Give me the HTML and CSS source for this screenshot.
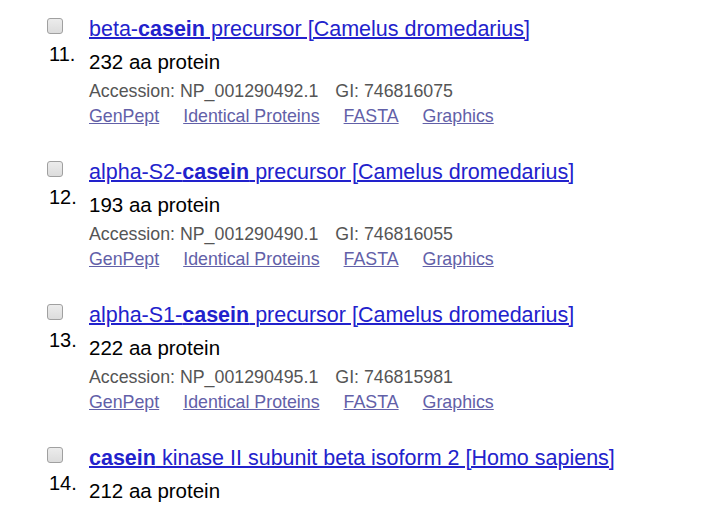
FILE: index.html
```html
<!DOCTYPE html>
<html lang="en">
<head>
    <meta charset="UTF-8">
    <title>Protein results</title>
    <link rel="stylesheet" href="styles.css">
</head>
<body>
    <div class="results">

        <div class="rslt">
            <div class="rslt-side">
                <span class="chk"></span>
                <span class="num">11.</span>
            </div>
            <div class="rslt-body">
                <p class="title"><a href="#">beta-<b>casein</b> precursor [Camelus dromedarius]</a></p>
                <p class="desc">232 aa protein</p>
                <p class="supp">Accession: NP_001290492.1 <span class="gi">GI: 746816075</span></p>
                <p class="links"><a href="#">GenPept</a><a href="#">Identical Proteins</a><a href="#">FASTA</a><a href="#">Graphics</a></p>
            </div>
        </div>

        <div class="rslt">
            <div class="rslt-side">
                <span class="chk"></span>
                <span class="num">12.</span>
            </div>
            <div class="rslt-body">
                <p class="title"><a href="#">alpha-S2-<b>casein</b> precursor [Camelus dromedarius]</a></p>
                <p class="desc">193 aa protein</p>
                <p class="supp">Accession: NP_001290490.1 <span class="gi">GI: 746816055</span></p>
                <p class="links"><a href="#">GenPept</a><a href="#">Identical Proteins</a><a href="#">FASTA</a><a href="#">Graphics</a></p>
            </div>
        </div>

        <div class="rslt">
            <div class="rslt-side">
                <span class="chk"></span>
                <span class="num">13.</span>
            </div>
            <div class="rslt-body">
                <p class="title"><a href="#">alpha-S1-<b>casein</b> precursor [Camelus dromedarius]</a></p>
                <p class="desc">222 aa protein</p>
                <p class="supp">Accession: NP_001290495.1 <span class="gi">GI: 746815981</span></p>
                <p class="links"><a href="#">GenPept</a><a href="#">Identical Proteins</a><a href="#">FASTA</a><a href="#">Graphics</a></p>
            </div>
        </div>

        <div class="rslt">
            <div class="rslt-side">
                <span class="chk"></span>
                <span class="num">14.</span>
            </div>
            <div class="rslt-body">
                <p class="title"><a href="#"><b>casein</b> kinase II subunit beta isoform 2 [Homo sapiens]</a></p>
                <p class="desc">212 aa protein</p>
            </div>
        </div>

    </div>
</body>
</html>
```

FILE: styles.css
```css
/* Search result list */
body {
    margin: 0;
    padding: 17px 0 0 47px;
    background-color: #ffffff;
    color: #000;
    font-family: "Liberation Sans", Arial, sans-serif;
    overflow: hidden;
}

p {
    margin: 0;
}

.rslt {
    display: grid;
    grid-template-columns: 42px 1fr;
    margin-bottom: 33px;
}

.rslt:last-child {
    margin-bottom: 0;
}

.rslt-side {
    display: flex;
    flex-direction: column;
    align-items: flex-start;
}

.chk {
    width: 14px;
    height: 14px;
    margin-top: 1px;
    border: 1px solid #a0a0a0;
    border-radius: 3px;
    background: linear-gradient(#ececec, #dcdcdc);
}

.num {
    margin-top: 8px;
    margin-left: 2px;
    font-size: 20px;
    line-height: 24px;
}

.title {
    font-size: 21.5px;
    line-height: 24px;
    white-space: nowrap;
}

.title a {
    color: #2222cc;
    text-decoration: underline;
    text-decoration-thickness: 2px;
}

.desc {
    margin-top: 8px;
    font-size: 20.5px;
    line-height: 26px;
}

.supp {
    margin-top: 5px;
    font-size: 17.8px;
    line-height: 22px;
    color: #555;
}

.gi {
    margin-left: 12px;
}

.links {
    margin-top: 3px;
    font-size: 17.8px;
    line-height: 22px;
    display: flex;
    gap: 24px;
}

.links a {
    color: #6260a8;
}
```
